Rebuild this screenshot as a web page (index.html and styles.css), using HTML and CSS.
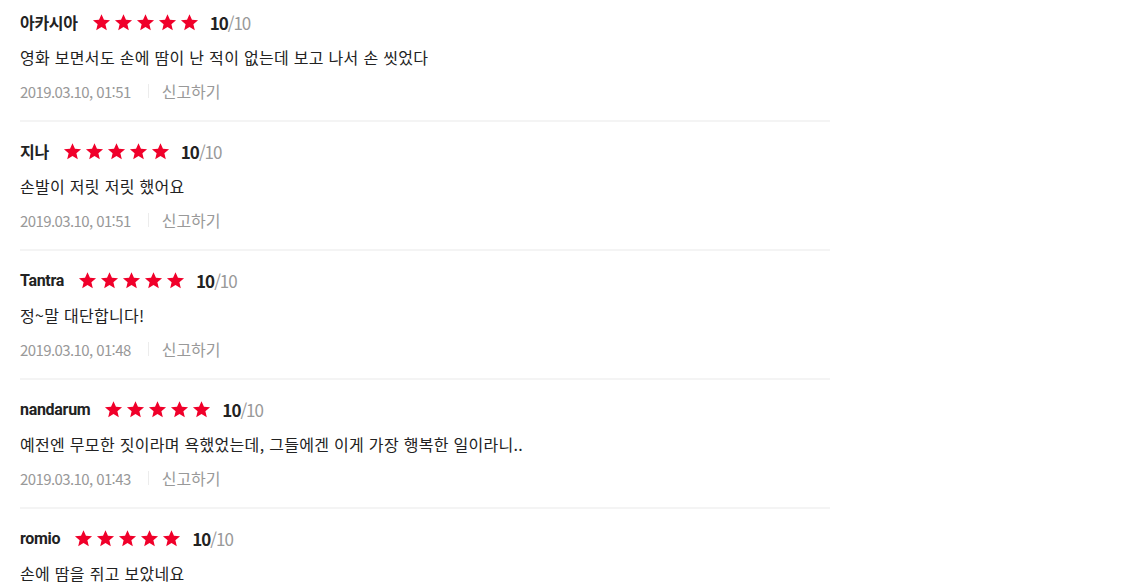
FILE: index.html
```html
<!DOCTYPE html>
<html lang="ko">
<head>
  <meta charset="UTF-8">
  <meta name="viewport" content="width=device-width, initial-scale=1.0">
  <title>관람평</title>
  <link rel="stylesheet" href="styles.css">
</head>
<body>
  <svg width="0" height="0" class="defs">
    <symbol id="star" viewBox="0 0 24 24">
      <path d="M12 1.5l3.1 7.1 7.7.6-5.9 5 1.8 7.6L12 17.8l-6.7 4 1.8-7.6-5.9-5 7.7-.6z"/>
    </symbol>
  </svg>

  <ul class="review-list">
    <li class="review">
      <div class="review-head">
        <strong class="name">아카시아</strong>
        <span class="stars"><svg><use href="#star"/></svg><svg><use href="#star"/></svg><svg><use href="#star"/></svg><svg><use href="#star"/></svg><svg><use href="#star"/></svg></span>
        <span class="score"><b>10</b>/10</span>
      </div>
      <p class="comment">영화 보면서도 손에 땀이 난 적이 없는데 보고 나서 손 씻었다</p>
      <div class="meta"><span class="date">2019.03.10, 01:51</span><a class="report">신고하기</a></div>
    </li>

    <li class="review">
      <div class="review-head">
        <strong class="name">지나</strong>
        <span class="stars"><svg><use href="#star"/></svg><svg><use href="#star"/></svg><svg><use href="#star"/></svg><svg><use href="#star"/></svg><svg><use href="#star"/></svg></span>
        <span class="score"><b>10</b>/10</span>
      </div>
      <p class="comment">손발이 저릿 저릿 했어요</p>
      <div class="meta"><span class="date">2019.03.10, 01:51</span><a class="report">신고하기</a></div>
    </li>

    <li class="review">
      <div class="review-head">
        <strong class="name">Tantra</strong>
        <span class="stars"><svg><use href="#star"/></svg><svg><use href="#star"/></svg><svg><use href="#star"/></svg><svg><use href="#star"/></svg><svg><use href="#star"/></svg></span>
        <span class="score"><b>10</b>/10</span>
      </div>
      <p class="comment">정~말 대단합니다!</p>
      <div class="meta"><span class="date">2019.03.10, 01:48</span><a class="report">신고하기</a></div>
    </li>

    <li class="review">
      <div class="review-head">
        <strong class="name">nandarum</strong>
        <span class="stars"><svg><use href="#star"/></svg><svg><use href="#star"/></svg><svg><use href="#star"/></svg><svg><use href="#star"/></svg><svg><use href="#star"/></svg></span>
        <span class="score"><b>10</b>/10</span>
      </div>
      <p class="comment">예전엔 무모한 짓이라며 욕했었는데, 그들에겐 이게 가장 행복한 일이라니..</p>
      <div class="meta"><span class="date">2019.03.10, 01:43</span><a class="report">신고하기</a></div>
    </li>

    <li class="review">
      <div class="review-head">
        <strong class="name">romio</strong>
        <span class="stars"><svg><use href="#star"/></svg><svg><use href="#star"/></svg><svg><use href="#star"/></svg><svg><use href="#star"/></svg><svg><use href="#star"/></svg></span>
        <span class="score"><b>10</b>/10</span>
      </div>
      <p class="comment">손에 땀을 쥐고 보았네요</p>
      <div class="meta"><span class="date">2019.03.10, 01:40</span><a class="report">신고하기</a></div>
    </li>
  </ul>
</body>
</html>
```

FILE: styles.css
```css
body {
  margin: 0;
  font-family: "Noto Sans CJK KR", "Noto Sans", sans-serif;
  color: #222;
  background: #fff;
}

.defs {
  position: absolute;
}

/* Review list */
.review-list {
  list-style: none;
  margin: 0;
  padding: 0 0 0 20px;
  width: 810px;
}

.review {
  padding: 15px 0 18px;
  border-bottom: 2px solid #f4f4f4;
}

.review:first-child {
  padding-top: 8px;
}

/* Name, stars, score */
.review-head {
  display: flex;
  align-items: center;
  height: 28px;
}

.name {
  font-family: Roboto, "Noto Sans CJK KR", sans-serif;
  font-size: 16px;
  font-weight: 700;
  letter-spacing: -0.3px;
  margin-right: 14px;
}

.stars {
  display: flex;
  gap: 3px;
  margin-right: 11px;
}

.stars svg {
  width: 19px;
  height: 19px;
  fill: #f0002a;
}

.score {
  font-size: 17px;
  color: #999;
  letter-spacing: -1px;
}

.score b {
  color: #222;
  font-weight: 700;
}

/* Comment */
.comment {
  margin: 10px 0 0;
  font-size: 16px;
  line-height: 22px;
  letter-spacing: 0.3px;
}

/* Date and report */
.meta {
  display: flex;
  align-items: center;
  margin-top: 12px;
  height: 22px;
  font-size: 15px;
  color: #999;
}

.date {
  letter-spacing: -0.6px;
}

.report {
  display: flex;
  align-items: center;
  font-size: 16px;
  cursor: pointer;
}

.report::before {
  content: "";
  width: 1px;
  height: 14px;
  background: #ececec;
  margin: 0 13px 0 17px;
}
```
